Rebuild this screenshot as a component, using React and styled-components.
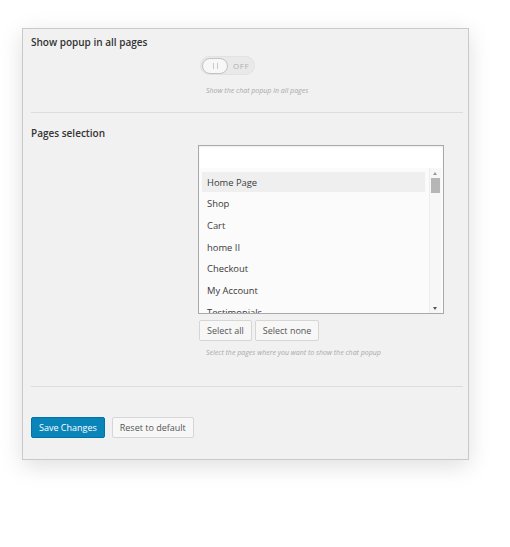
import React from "react";
import styled, { createGlobalStyle } from "styled-components";

const GlobalStyle = createGlobalStyle`
  html, body {
    margin: 0;
    padding: 0;
    background: #fff;
    font-family: "Open Sans", "Liberation Sans", sans-serif;
  }
`;

const Page = styled.div`
  width: 510px;
  height: 547px;
  padding: 28px 0 0 22px;
  box-sizing: border-box;
`;

const Panel = styled.div`
  width: 447px;
  height: 432px;
  box-sizing: border-box;
  background: #f1f1f1;
  border: 1px solid #c9c9c9;
  box-shadow: 0 6px 22px rgba(0, 0, 0, 0.13);
  padding: 6px 5px 0 8px;
`;

const Section = styled.div`
  padding-bottom: ${({ bottom }) => bottom}px;
  border-bottom: 1px solid #dcdcdc;
  margin-bottom: ${({ after }) => after}px;
`;

const Heading = styled.h3`
  margin: 0;
  font-size: 10px;
  line-height: 15px;
  font-weight: 600;
  color: #333;
`;

const Field = styled.div`
  margin-left: 168px;
  margin-top: ${({ top }) => top}px;
`;

const Toggle = styled.div`
  width: 55px;
  height: 19px;
  margin-left: 1px;
  box-sizing: border-box;
  border-radius: 10px;
  background: #e9e9e9;
  border: 1px solid #e2e2e2;
  display: flex;
  align-items: center;
  padding-left: 1px;
  gap: 5px;
`;

const Knob = styled.div`
  width: 26px;
  height: 16px;
  box-sizing: border-box;
  border-radius: 8px;
  border: 1.5px solid #c2c2c2;
  background: #f7f7f7;
  display: flex;
  align-items: center;
  justify-content: center;
  gap: 3px;
  span {
    width: 1px;
    height: 6px;
    background: #c8c8c8;
  }
`;

const ToggleText = styled.span`
  font-size: 8px;
  letter-spacing: 0.6px;
  color: #b0b0b0;
`;

const Hint = styled.p`
  margin: ${({ top }) => top}px 0 0 7px;
  font-size: 7px;
  line-height: 9px;
  font-style: italic;
  color: #a9a9a9;
`;

const SelectBox = styled.div`
  width: 246px;
  height: 169px;
  margin-left: -1px;
  box-sizing: border-box;
  border: 1px solid #a9a9a9;
  background: #fff;
  box-shadow: inset 0 1px 2px rgba(0, 0, 0, 0.07);
  display: flex;
  flex-direction: column;
  overflow: hidden;
`;

const Search = styled.div`
  height: 22px;
  flex: none;
`;

const ListWrap = styled.div`
  flex: 1;
  display: flex;
  background: #fbfbfb;
  overflow: hidden;
`;

const List = styled.ul`
  flex: 1;
  list-style: none;
  margin: 0;
  padding: 4px 0 0 3px;
`;

const Item = styled.li`
  height: 20px;
  margin-bottom: 1.7px;
  padding-left: 5px;
  display: flex;
  align-items: center;
  font-size: 9.4px;
  color: #3a3a3a;
  background: ${({ active }) => (active ? "#efefef" : "transparent")};
`;

const Scrollbar = styled.div`
  width: 11px;
  margin: 0 2px 0 4px;
  position: relative;
  background: #f7f7f7;
  border-left: 1px solid #eee;
`;

const Arrow = styled.div`
  position: absolute;
  left: 3px;
  ${({ down }) => (down ? "bottom: 3px;" : "top: 4px;")}
  width: 0;
  height: 0;
  border-left: 2.5px solid transparent;
  border-right: 2.5px solid transparent;
  ${({ down }) =>
    down ? "border-top: 3px solid #555;" : "border-bottom: 3px solid #999;"}
`;

const Thumb = styled.div`
  position: absolute;
  top: 10px;
  left: 1px;
  width: 9px;
  height: 15px;
  background: #b6b6b6;
`;

const ButtonRow = styled.div`
  display: flex;
  gap: ${({ gap }) => gap}px;
  margin-top: ${({ top }) => top}px;
`;

const Button = styled.button`
  height: 21px;
  padding: 0 ${({ pad }) => pad}px;
  box-sizing: border-box;
  font-family: inherit;
  font-size: 9px;
  border-radius: 2px;
  cursor: pointer;
  color: ${({ primary }) => (primary ? "#fff" : "#555")};
  background: ${({ primary }) => (primary ? "#0a85ba" : "#f7f7f7")};
  border: 1px solid ${({ primary }) => (primary ? "#0073aa" : "#d6d6d6")};
`;

const pages = ["Home Page", "Shop", "Cart", "home II", "Checkout", "My Account", "Testimonials"];

export default function App() {
  return (
    <Page>
      <GlobalStyle />
      <Panel>
        <Section bottom={17} after={13}>
          <Heading>Show popup in all pages</Heading>
          <Field top={6}>
            <Toggle>
              <Knob>
                <span />
                <span />
              </Knob>
              <ToggleText>OFF</ToggleText>
            </Toggle>
            <Hint top={11}>Show the chat popup in all pages</Hint>
          </Field>
        </Section>
        <Section bottom={29} after={30}>
          <Heading>Pages selection</Heading>
          <Field top={4}>
            <SelectBox>
              <Search />
              <ListWrap>
                <List>
                  {pages.map((p, i) => (
                    <Item key={p} active={i === 0}>
                      {p}
                    </Item>
                  ))}
                </List>
                <Scrollbar>
                  <Arrow />
                  <Thumb />
                  <Arrow down />
                </Scrollbar>
              </ListWrap>
            </SelectBox>
            <ButtonRow gap={3} top={6}>
              <Button pad={7}>Select all</Button>
              <Button pad={7}>Select none</Button>
            </ButtonRow>
            <Hint top={7}>Select the pages where you want to show the chat popup</Hint>
          </Field>
        </Section>
        <ButtonRow gap={7} top={0}>
          <Button primary pad={7}>Save Changes</Button>
          <Button pad={7}>Reset to default</Button>
        </ButtonRow>
      </Panel>
    </Page>
  );
}
